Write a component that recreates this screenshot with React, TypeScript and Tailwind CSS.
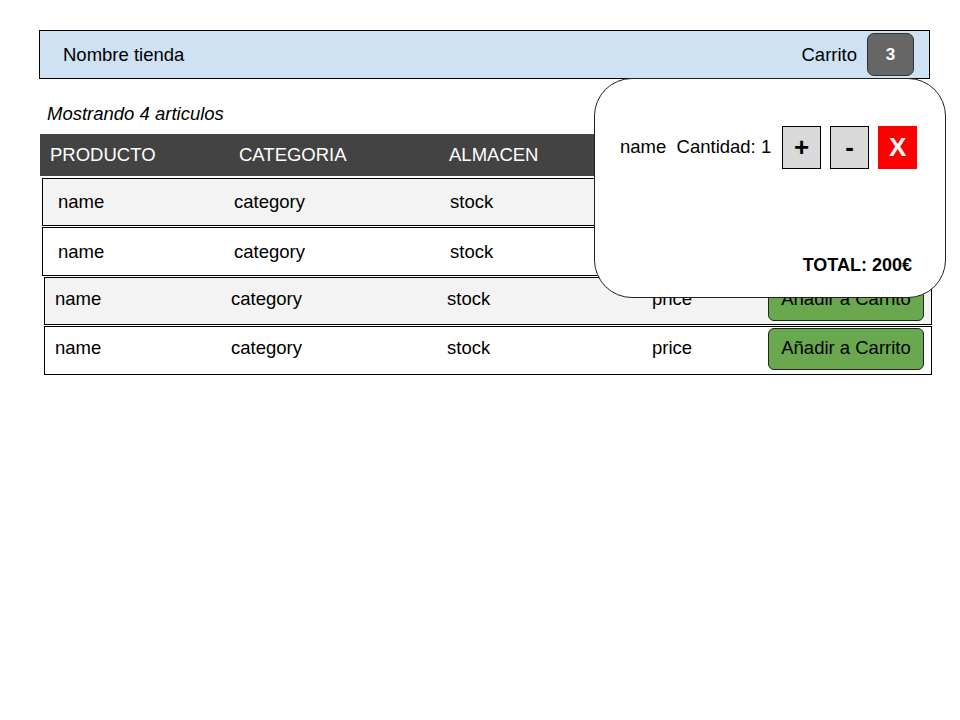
const rows = [
  { bg: 'bg-[#f3f3f3]', shift: true, h: 'h-[48px]' },
  { bg: 'bg-white', shift: true, h: 'h-[49px]' },
  { bg: 'bg-[#f3f3f3]', shift: false, h: 'h-[48px]' },
  { bg: 'bg-white', shift: false, h: 'h-[49px]' },
];

function ProductRow({ bg, shift, h }: { bg: string; shift: boolean; h: string }) {
  return (
    <div
      className={`${bg} ${h} mt-[1px] border border-black flex ${
        shift ? 'ml-[42px] w-[888px] items-center pl-[15px]' : 'ml-[44px] w-[888px] items-start pl-[10px]'
      }`}
    >
      <div className={`flex w-full items-center ${shift ? 'pt-[1px]' : 'h-[43px]'}`}>
        <span className="w-[176px]">name</span>
        <span className="w-[216px]">category</span>
        <span className="w-[205px]">stock</span>
        <span className="w-[116px]">price</span>
        <button className="w-[156px] h-[42px] rounded-[6px] border border-[#222] bg-[#6aa84f] text-black">
          Añadir a Carrito
        </button>
      </div>
    </div>
  );
}

export default function App() {
  return (
    <div className="relative flex flex-col w-[960px] h-[720px] pt-[30px] bg-white text-black text-[18.5px] leading-none font-['Liberation_Sans',Arial,sans-serif]">
      <div className="ml-[39px] w-[891px] h-[49px] border border-black bg-[#cfe2f3] flex items-center pl-[23px] pr-[15px] pt-[2px]">
        <span>Nombre tienda</span>
        <span className="ml-auto">Carrito</span>
        <div className="ml-[10px] -mt-[2px] w-[47px] h-[43px] rounded-[7px] border border-[#333] bg-[#666666] text-white font-bold text-[17px] flex items-center justify-center">
          3
        </div>
      </div>

      <div className="ml-[47px] mt-[25px] h-[20px] leading-[20px] italic">Mostrando 4 articulos</div>

      <div className="ml-[40px] mt-[10px] w-[890px] h-[42px] bg-[#434343] text-white flex items-center pl-[10px] pt-[1px]">
        <span className="w-[189px]">PRODUCTO</span>
        <span className="w-[210px]">CATEGORIA</span>
        <span className="w-[205px]">ALMACEN</span>
        <span>PRECIO</span>
      </div>

      <div className="mt-[1px]">
        {rows.map((r, i) => (
          <ProductRow key={i} {...r} />
        ))}
      </div>

      <div className="absolute left-[594px] top-[78px] w-[352px] h-[220px] rounded-[38px] border border-[#222] bg-white flex flex-col pl-[25px] pr-[33px]">
        <div className="mt-[46px] flex items-center h-[43px] whitespace-nowrap pt-[1px]">
          <span className="shrink-0">name&nbsp;&nbsp;Cantidad: 1</span>
          <button className="shrink-0 ml-[11px] w-[39px] h-[43px] border border-black bg-[#d9d9d9] font-bold text-[26px] flex items-center justify-center">
            +
          </button>
          <button className="shrink-0 ml-[9px] w-[39px] h-[43px] border border-black bg-[#d9d9d9] font-bold text-[26px] flex items-center justify-center">
            -
          </button>
          <button className="shrink-0 ml-[9px] w-[39px] h-[43px] bg-[#ff0000] text-white font-bold text-[26px] flex items-center justify-center">
            X
          </button>
        </div>
        <div className="mt-[88px] self-end font-bold text-[18px]">TOTAL: 200€</div>
      </div>
    </div>
  );
}
